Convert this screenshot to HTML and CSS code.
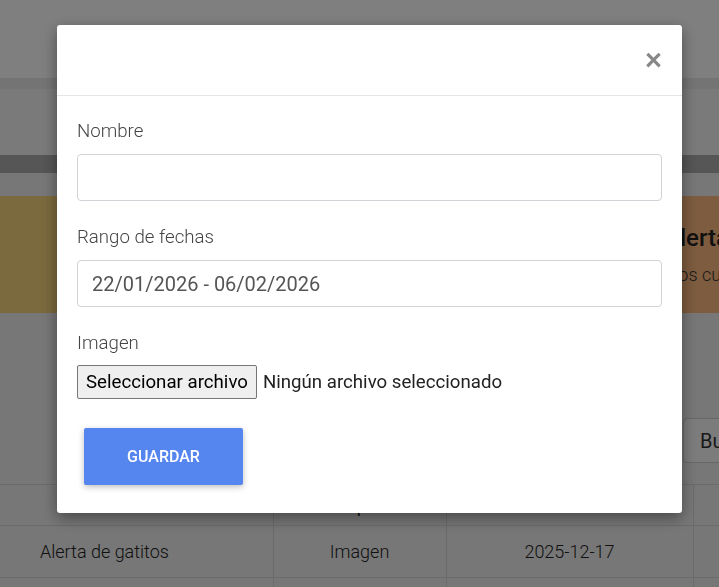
FILE: index.html
```html
<!DOCTYPE html>
<html lang="es">
<head>
    <meta charset="UTF-8">
    <meta name="viewport" content="width=device-width, initial-scale=1.0">
    <title>Publicidad</title>
    <link rel="stylesheet" href="styles.css">
</head>
<body>

    <!-- Pagina de fondo -->
    <div class="navbar"></div>
    <div class="subbar"></div>
    <div class="strip"></div>

    <div class="cards">
        <div class="card card-yellow"></div>
        <div class="card card-orange">
            <h3>Alertas</h3>
            <p>Eventos cumplidos</p>
        </div>
    </div>

    <div class="toolbar">
        <button class="btn-buscar">Buscar</button>
    </div>

    <table class="tabla">
        <colgroup>
            <col style="width: 273px">
            <col style="width: 173px">
            <col style="width: 247px">
            <col style="width: 120px">
        </colgroup>
        <thead>
            <tr>
                <th>Nombre</th>
                <th>Tipo</th>
                <th>Fecha</th>
                <th></th>
            </tr>
        </thead>
        <tbody>
            <tr>
                <td class="first">Alerta de gatitos</td>
                <td>Imagen</td>
                <td>2025-12-17</td>
                <td></td>
            </tr>
            <tr>
                <td class="first"></td>
                <td></td>
                <td></td>
                <td></td>
            </tr>
        </tbody>
    </table>

    <!-- Modal -->
    <div class="overlay">
        <div class="modal">
            <div class="modal-header">
                <button class="close">&times;</button>
            </div>
            <div class="modal-body">
                <div class="form-group">
                    <label for="nombre">Nombre</label>
                    <input type="text" id="nombre" class="form-control">
                </div>
                <div class="form-group">
                    <label for="rango">Rango de fechas</label>
                    <input type="text" id="rango" class="form-control" value="22/01/2026 - 06/02/2026">
                </div>
                <div class="form-group">
                    <label>Imagen</label>
                    <div class="file-row">
                        <label class="file-btn">Seleccionar archivo<input type="file" hidden></label>
                        <span class="file-name">Ningún archivo seleccionado</span>
                    </div>
                </div>
                <button class="btn-guardar">Guardar</button>
            </div>
        </div>
    </div>

</body>
</html>
```

FILE: styles.css
```css
/* Estilos generales */
body {
    font-family: 'Roboto', 'Liberation Sans', sans-serif;
    background-color: #eeeeee;
    color: #333;
    margin: 0;
    overflow: hidden;
    height: 587px;
}

/* Fondo de la pagina */
.navbar {
    height: 78px;
    background: #ffffff;
}

.subbar {
    height: 77px;
    background: #f4f4f4;
    box-shadow: inset 0 11px 0 #e9e9e9;
}

.strip {
    height: 18px;
    background: #acacac;
}

.cards {
    display: flex;
    gap: 14px;
    margin-top: 23px;
    height: 117px;
}

.card {
    flex: none;
    box-sizing: border-box;
    padding-top: 20px;
    white-space: nowrap;
    overflow: hidden;
}

.card h3 {
    font-size: 24px;
    font-weight: 500;
    margin: 8px 0 12px;
    color: #222;
}

.card p {
    font-size: 18px;
    font-weight: 300;
    margin: 0;
    color: #333;
}

.card-yellow {
    width: 355px;
    background: #f6d47c;
}

.card-orange {
    width: 700px;
    background: #fbb97f;
    padding-left: 295px;
}

.card-orange p {
    margin-left: -29px;
}

.toolbar {
    display: flex;
    justify-content: flex-end;
    margin-top: 105px;
    margin-right: -60px;
}

.btn-buscar {
    font-family: inherit;
    font-size: 20px;
    color: #333;
    background: #f9f9f9;
    border: 1px solid #cfcfcf;
    border-radius: 4px;
    height: 45px;
    width: 96px;
    text-align: left;
    padding-left: 16px;
}

.tabla {
    border-collapse: collapse;
    table-layout: fixed;
    margin-top: 21px;
    width: 813px;
    font-weight: 300;
    font-size: 18px;
    color: #222;
}

.tabla th,
.tabla td {
    border: 1px solid #d6d6d6;
    text-align: center;
    padding: 0;
}

.tabla th {
    height: 40px;
    font-weight: 400;
}

.tabla td {
    height: 51px;
}

.tabla th:first-child,
.tabla td:first-child {
    border-left: none;
}

.tabla td.first {
    text-align: left;
    padding-left: 40px;
}

/* Modal */
.overlay {
    position: fixed;
    inset: 0;
    background: rgba(0, 0, 0, 0.5);
    padding: 25px 0 0 57px;
}

.modal {
    width: 625px;
    height: 488px;
    background: #ffffff;
    border-radius: 3px;
    box-shadow: 0 5px 15px rgba(0, 0, 0, 0.4);
    box-sizing: border-box;
}

.modal-header {
    height: 71px;
    border-bottom: 1px solid #e5e5e5;
    display: flex;
    justify-content: flex-end;
    align-items: center;
    padding-right: 20px;
    box-sizing: border-box;
}

.close {
    background: none;
    border: none;
    padding: 0;
    font-family: 'Liberation Sans', sans-serif;
    font-size: 29px;
    font-weight: bold;
    line-height: 1;
    color: #888;
    cursor: pointer;
}

.modal-body {
    padding: 22px 20px 0 20px;
}

.form-group {
    margin-bottom: 23px;
}

.form-group label {
    display: block;
    font-size: 14pt;
    font-weight: 300;
    line-height: 26px;
    color: #444;
    margin-bottom: 10px;
}

.form-control {
    width: 100%;
    height: 47px;
    box-sizing: border-box;
    border: 1px solid #cfd3d7;
    border-radius: 4px;
    padding: 0 14px;
    font-family: 'Roboto', sans-serif;
    font-size: 20px;
    color: #555;
}

.file-row {
    display: flex;
    align-items: center;
    margin-top: -1px;
}

.form-group .file-btn {
    display: inline-block;
    margin: 0;
    font-weight: 400;
    font-size: 14pt;
    line-height: 32px;
    color: #000;
    background: #efefef;
    border: 1px solid #767676;
    border-radius: 2px;
    padding: 0 8px;
    cursor: pointer;
}

.file-name {
    font-size: 14pt;
    color: #222;
    margin-left: 6px;
}

.btn-guardar {
    font-family: 'Roboto', sans-serif;
    font-weight: 500;
    font-size: 16px;
    text-transform: uppercase;
    color: #ffffff;
    background: #5585ee;
    border: none;
    border-radius: 2px;
    width: 159px;
    height: 57px;
    margin: 6px 0 0 7px;
    box-shadow: 0 2px 6px rgba(0, 0, 0, 0.26);
    cursor: pointer;
}
```
